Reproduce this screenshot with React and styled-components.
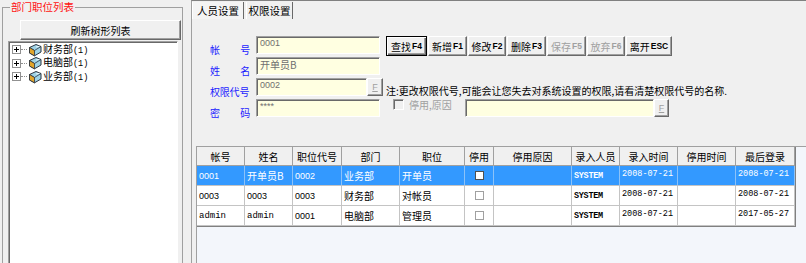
import React from "react";
import styled, { createGlobalStyle } from "styled-components";

const CJK = `"Noto Sans CJK SC", "Liberation Sans", sans-serif`;
const SANS = `"Liberation Sans", "Noto Sans CJK SC", sans-serif`;
const MONO = `"Liberation Mono", "DejaVu Sans Mono", monospace`;

const GlobalStyle = createGlobalStyle`
  html, body { margin: 0; padding: 0; background: #f0f0f0; overflow: hidden; }
  #root { width: 806px; height: 263px; overflow: hidden; }
  * { box-sizing: border-box; }
`;

const Window = styled.div`
  display: flex;
  width: 806px;
  height: 263px;
  background: #f0f0f0;
  font-family: ${CJK};
  font-size: 10px;
  color: #000;
  overflow: hidden;
`;

/* ---------- left: department tree ---------- */

const LeftPane = styled.div`
  width: 191px;
  flex: none;
  padding-left: 2px;
`;

const GroupBox = styled.fieldset`
  margin: 0;
  padding: 6px 0 0 0;
  width: 181px;
  height: 300px;
  min-width: 0;
  border: 1px solid #a0a0a0;
`;

const GroupTitle = styled.legend`
  margin-left: 7px;
  padding: 0 1px;
  color: #ff1010;
  font-size: 10.5px;
  line-height: 14px;
`;

const RaisedButton = styled.button`
  display: flex;
  align-items: center;
  justify-content: center;
  padding: 0;
  margin: 0;
  background: #f0f0f0;
  border: 1px solid;
  border-color: #fff #696969 #696969 #fff;
  box-shadow: inset -1px -1px 0 #a0a0a0;
  font-family: ${CJK};
  font-size: 10px;
  color: #000;
`;

const RefreshButton = styled(RaisedButton)`
  margin-left: 17px;
  width: 161px;
  height: 20px;
`;

const TreeBox = styled.div`
  margin: 1px 0 0 5px;
  width: 170px;
  height: 250px;
  background: #fff;
  border: 1px solid;
  border-color: #a0a0a0 #fff #fff #a0a0a0;
  box-shadow: inset 1px 1px 0 #696969;
  padding: 1px 0 0 3px;
`;

const TreeRow = styled.div`
  display: flex;
  align-items: center;
  height: 13.6px;
`;

const Connector = styled.span`
  width: 6px;
  margin-right: 1px;
  border-top: 1px dotted #909090;
`;

const TreeText = styled.span`
  margin-left: 1px;
  font-size: 10px;
  line-height: 12px;
  white-space: nowrap;
`;

const Count = styled.span`
  font-family: ${MONO};
  font-size: 8.5px;
`;

const PlusBox = () => (
  <svg width="9" height="9" viewBox="0 0 9 9">
    <rect x="0.5" y="0.5" width="8" height="8" fill="#fff" stroke="#919191" />
    <path d="M2 4.5h5M4.5 2v5" stroke="#000" />
  </svg>
);

const DeptIcon = () => (
  <svg width="14" height="14" viewBox="0 0 14 14">
    <path d="M1.5 4.5 L8 1.5 L13 3.5 L13 9 L6.5 12.8 L1.5 10 Z" fill="#9fd3e6" stroke="#2b3440" />
    <path d="M1.5 4.5 L6.5 7.5 L13 3.5" fill="none" stroke="#2b3440" strokeWidth="0.8" />
    <path d="M1.5 10 L6.5 12.8 L6.5 7.5 L1.5 4.5 Z" fill="#e3a52a" stroke="#2b3440" strokeWidth="0.8" />
    <path d="M8 4 L11.5 3.2" stroke="#ffffff" strokeWidth="0.8" />
  </svg>
);

/* ---------- right: tabs + form + grid ---------- */

const RightPane = styled.div`
  flex: 1;
  display: flex;
  flex-direction: column;
  border-left: 1px solid #a0a0a0;
  border-top: 1px solid #808080;
`;

const TabBar = styled.div`
  display: flex;
  height: 19px;
  flex: none;
`;

const Tab = styled.div`
  width: ${p => p.$w}px;
  margin-top: 1px;
  margin-left: ${p => p.$gap || 0}px;
  height: 17px;
  display: flex;
  align-items: center;
  justify-content: center;
  border-left: 1px solid #fff;
  border-right: 1px solid #696969;
  font-size: 10.5px;
  background: ${p => (p.$active ? "#f4f4f4" : "#f0f0f0")};
`;

const FormArea = styled.div`
  flex: none;
  height: 126px;
  padding: 16px 0 0 18px;
  display: grid;
  grid-template-columns: 46px 130px 1fr;
  grid-template-rows: repeat(4, 18px);
  row-gap: 3px;
`;

const FieldLabel = styled.div`
  width: 40px;
  display: flex;
  justify-content: space-between;
  align-items: flex-end;
  margin-bottom: -2px;
  color: #1c1cff;
  font-size: 10px;
  line-height: 13px;
  white-space: nowrap;
  letter-spacing: -0.2px;
`;

const Field = styled.div`
  width: ${p => p.$w}px;
  height: ${p => p.$h || 18}px;
  flex: none;
  background: #ffffe1;
  border: 1px solid;
  border-color: #a0a0a0 #fff #fff #a0a0a0;
  box-shadow: inset 1px 1px 0 #696969;
  padding: 1px 2px 0 3px;
  color: #707070;
  font-family: ${p => (p.$zh ? CJK : SANS)};
  font-size: ${p => (p.$zh ? 10 : 9)}px;
  line-height: 11px;
  white-space: nowrap;
`;

const FieldLine = styled.div`
  display: flex;
`;

const FButton = styled(RaisedButton)`
  width: ${p => p.$w || 16}px;
  height: ${p => p.$h || 18}px;
  flex: none;
  font-family: ${SANS};
  font-size: 9px;
  color: #a0a0a0;
  text-decoration: underline;
`;

const ButtonRow = styled.div`
  display: flex;
  gap: 1px;
  height: 20px;
`;

const ToolButton = styled(RaisedButton)`
  width: ${p => p.$w}px;
  height: 20px;
  flex: none;
  color: ${p => (p.$disabled ? "#a0a0a0" : "#000")};
  ${p =>
    p.$focused &&
    `border-color: #000;
     box-shadow: inset 1px 1px 0 #fff, inset -1px -1px 0 #696969, inset -2px -2px 0 #a0a0a0;`}
`;

const Key = styled.span`
  font-family: ${SANS};
  font-weight: bold;
  font-size: 8.5px;
  margin-left: 1px;
`;

const Note = styled.div`
  align-self: end;
  margin-bottom: -2px;
  font-size: 10px;
  line-height: 14px;
  white-space: nowrap;
`;

const DisableLine = styled.div`
  display: flex;
  align-items: flex-start;
`;

const DisableGroup = styled.div`
  width: 79px;
  display: flex;
  align-items: center;
  padding-left: 7px;
  height: 11px;
`;

const CheckBox = styled.span`
  width: ${p => p.$size || 11}px;
  height: ${p => p.$size || 11}px;
  flex: none;
  background: #fff;
  border: 1px solid ${p => p.$border || "#a0a0a0"};
  ${p => p.$sunken && "border-color: #a0a0a0 #fff #fff #a0a0a0; box-shadow: inset 1px 1px 0 #696969; background: #f0f0f0;"}
`;

const GrayText = styled.span`
  margin-left: 5px;
  color: #a0a0a0;
  font-size: 10px;
  line-height: 11px;
`;

const GridWrap = styled.div`
  flex: 1;
  margin-left: 4px;
  background: #f3f6fb;
  border-top: 1px solid #a0a0a0;
  border-left: 1px solid #a0a0a0;
`;

const Table = styled.div`
  width: 599px;
  border-right: 1px solid #808080;
  border-bottom: 1px solid #808080;
`;

const COLS = [48, 48, 49, 58, 65, 29, 78, 48, 58, 58, 59];

const GridRow = styled.div`
  display: grid;
  grid-template-columns: ${COLS.map(w => w + "px").join(" ")};
  background: ${p => (p.$sel ? "#3399ff" : p.$head ? "#f0f0f0" : "#fff")};
  color: ${p => (p.$sel ? "#fff" : "#000")};
`;

const HeadCell = styled.div`
  height: 19px;
  display: flex;
  align-items: center;
  justify-content: center;
  border-right: 1px solid #a0a0a0;
  border-bottom: 1px solid #a0a0a0;
  font-size: 10px;
  white-space: nowrap;
`;

const FONTS = {
  num: `font-family: ${SANS}; font-size: 9px;`,
  mono: `font-family: ${MONO}; font-size: 9px;`,
  zh: `font-family: ${CJK}; font-size: 10px;`,
  sys: `font-family: ${MONO}; font-size: 8.5px; font-weight: bold; letter-spacing: -0.3px;`,
  date: `font-family: ${MONO}; font-size: 8.5px;`,
};

const Cell = styled.div`
  height: 20px;
  display: flex;
  align-items: ${p => (p.$top ? "flex-start" : "center")};
  justify-content: ${p => (p.$center ? "center" : "flex-start")};
  padding: ${p => (p.$top ? "2px 2px 0" : "0 2px")};
  border-right: 1px solid ${p => (p.$sel ? "#8cc2f8" : "#c4c4c4")};
  border-bottom: 1px solid #c4c4c4;
  white-space: nowrap;
  overflow: hidden;
  line-height: 12px;
  ${p => FONTS[p.$font]}
`;

const HEAD = ["帐号", "姓名", "职位代号", "部门", "职位", "停用", "停用原因", "录入人员", "录入时间", "停用时间", "最后登录"];
const KINDS = ["num", "zh", "num", "zh", "zh", "check", "zh", "sys", "date", "date", "date"];

const ROWS = [
  ["0001", "开单员B", "0002", "业务部", "开单员", "", "", "SYSTEM", "2008-07-21", "", "2008-07-21"],
  ["0003", "0003", "0003", "财务部", "对帐员", "", "", "SYSTEM", "2008-07-21", "", "2008-07-21"],
  ["admin", "admin", "0001", "电脑部", "管理员", "", "", "SYSTEM", "2008-07-21", "", "2017-05-27"],
];

const fontFor = (text, kind) => {
  if (/^[a-z]+$/.test(text)) return "mono";
  if (/^\d+$/.test(text)) return "num";
  return kind;
};

const DEPTS = ["财务部", "电脑部", "业务部"];

const BUTTONS = [
  { zh: "查找", key: "F4", w: 41, focused: true },
  { zh: "新增", key: "F1", w: 39 },
  { zh: "修改", key: "F2", w: 38 },
  { zh: "删除", key: "F3", w: 39 },
  { zh: "保存", key: "F5", w: 39, disabled: true },
  { zh: "放弃", key: "F6", w: 38, disabled: true },
  { zh: "离开", key: "ESC", w: 46 },
];

const Spread = ({ a, b }) => (
  <FieldLabel>
    <span>{a}</span>
    <span>{b}</span>
  </FieldLabel>
);

export default function App() {
  return (
    <Window>
      <GlobalStyle />
      <LeftPane>
        <GroupBox>
          <GroupTitle>部门职位列表</GroupTitle>
          <RefreshButton>刷新树形列表</RefreshButton>
          <TreeBox>
            {DEPTS.map(d => (
              <TreeRow key={d}>
                <PlusBox />
                <Connector />
                <DeptIcon />
                <TreeText>
                  {d}
                  <Count>(1)</Count>
                </TreeText>
              </TreeRow>
            ))}
          </TreeBox>
        </GroupBox>
      </LeftPane>

      <RightPane>
        <TabBar>
          <Tab $w={52} $active>人员设置</Tab>
          <Tab $w={47} $gap={2}>权限设置</Tab>
        </TabBar>

        <FormArea>
          <Spread a="帐" b="号" />
          <Field $w={124}>0001</Field>
          <ButtonRow>
            {BUTTONS.map(b => (
              <ToolButton key={b.key} $w={b.w} $focused={b.focused} $disabled={b.disabled}>
                {b.zh}
                <Key>{b.key}</Key>
              </ToolButton>
            ))}
          </ButtonRow>

          <Spread a="姓" b="名" />
          <Field $w={124} $zh>开单员B</Field>
          <div />

          <FieldLabel>权限代号</FieldLabel>
          <FieldLine>
            <Field $w={111}>0002</Field>
            <FButton>F</FButton>
          </FieldLine>
          <Note>注:更改权限代号,可能会让您失去对系统设置的权限,请看清楚权限代号的名称.</Note>

          <Spread a="密" b="码" />
          <Field $w={124}>****</Field>
          <DisableLine>
            <DisableGroup>
              <CheckBox $sunken />
              <GrayText>停用,原因</GrayText>
            </DisableGroup>
            <Field $w={189} $h={18} />
            <FButton $w={15}>F</FButton>
          </DisableLine>
        </FormArea>

        <GridWrap>
          <Table>
            <GridRow $head>
              {HEAD.map(h => (
                <HeadCell key={h}>{h}</HeadCell>
              ))}
            </GridRow>
            {ROWS.map((row, ri) => (
              <GridRow key={ri} $sel={ri === 0}>
                {row.map((text, ci) =>
                  KINDS[ci] === "check" ? (
                    <Cell key={ci} $center $sel={ri === 0}>
                      <CheckBox $size={9} $border={ri === 0 ? "#505050" : "#a0a0a0"} />
                    </Cell>
                  ) : (
                    <Cell
                      key={ci}
                      $sel={ri === 0}
                      $top={KINDS[ci] === "date"}
                      $font={fontFor(text, KINDS[ci])}
                    >
                      {text}
                    </Cell>
                  )
                )}
              </GridRow>
            ))}
          </Table>
        </GridWrap>
      </RightPane>
    </Window>
  );
}
